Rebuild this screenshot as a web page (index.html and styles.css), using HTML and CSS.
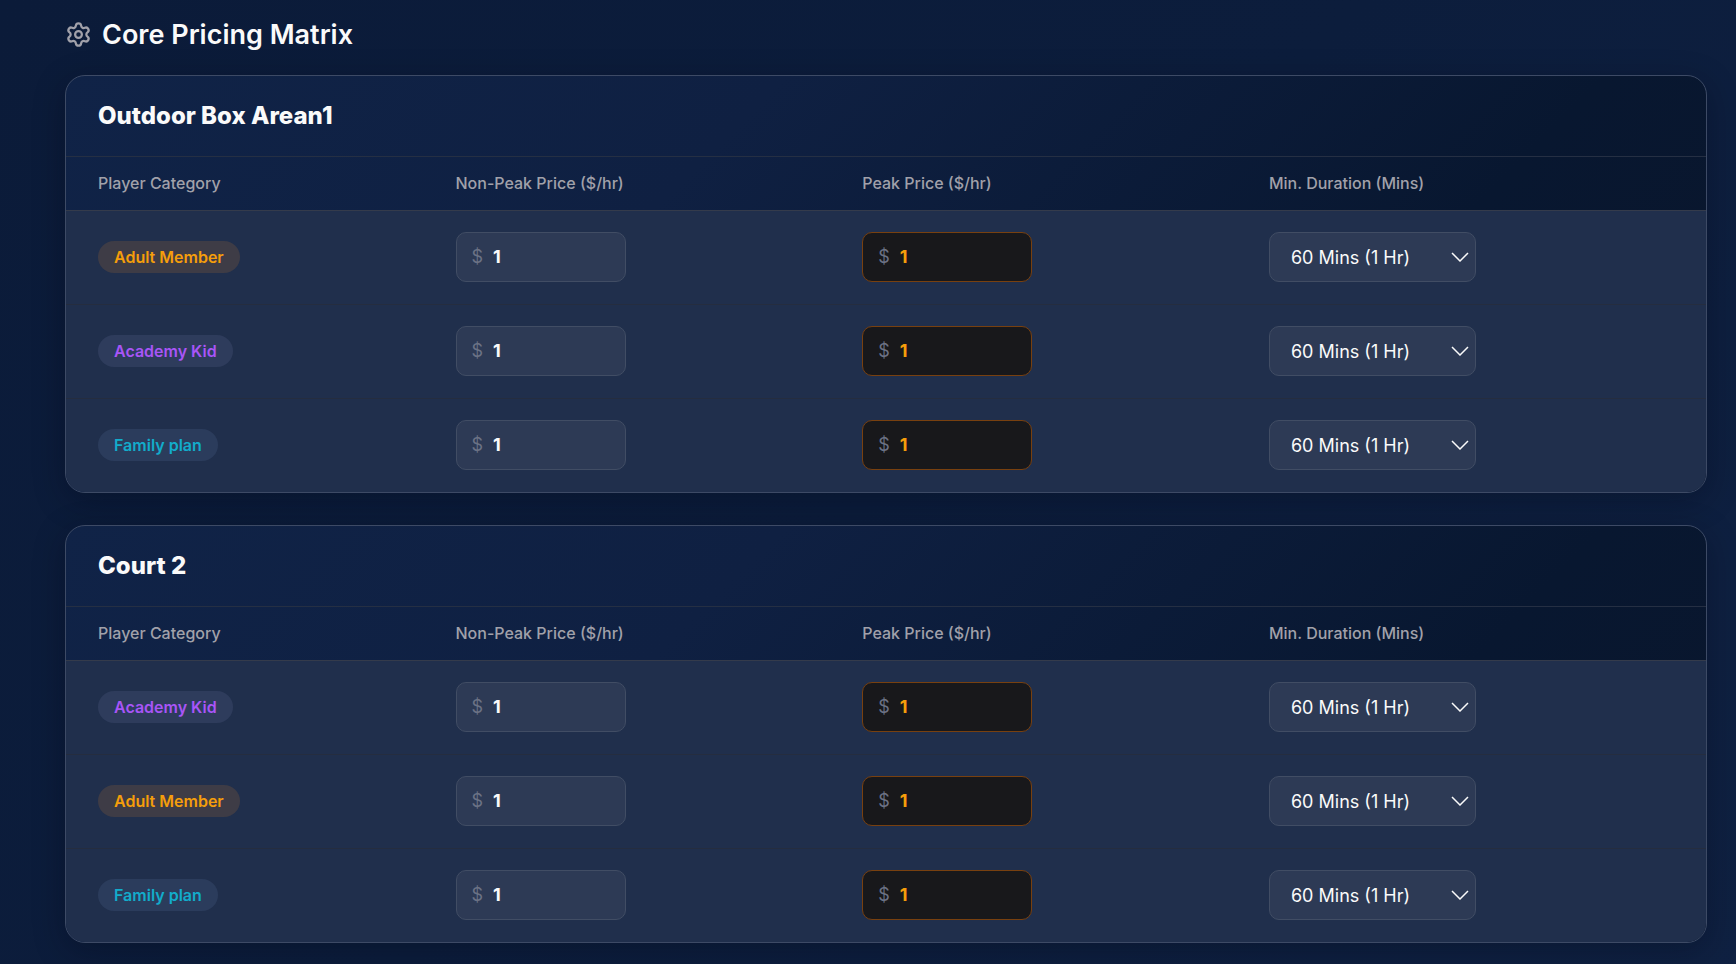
FILE: index.html
```html
<!DOCTYPE html>
<html lang="en">
<head>
    <meta charset="UTF-8">
    <meta name="viewport" content="width=device-width, initial-scale=1.0">
    <title>Core Pricing Matrix</title>
    <link rel="stylesheet" href="styles.css">
</head>
<body>
    <main class="page">
        <h1 class="page-title">
            <svg class="title-icon" viewBox="0 0 24 24" fill="none" stroke="currentColor" stroke-width="2" stroke-linecap="round" stroke-linejoin="round" aria-hidden="true">
                <path d="M9.671 4.136a2.34 2.34 0 0 1 4.659 0 2.34 2.34 0 0 0 3.319 1.915 2.34 2.34 0 0 1 2.33 4.033 2.34 2.34 0 0 0 0 3.831 2.34 2.34 0 0 1-2.33 4.033 2.34 2.34 0 0 0-3.319 1.915 2.34 2.34 0 0 1-4.659 0 2.34 2.34 0 0 0-3.32-1.915 2.34 2.34 0 0 1-2.33-4.033 2.34 2.34 0 0 0 0-3.831A2.34 2.34 0 0 1 6.35 6.051a2.34 2.34 0 0 0 3.319-1.915"/>
                <circle cx="12" cy="12" r="3"/>
            </svg>
            Core Pricing Matrix
        </h1>

        <section class="card">
            <h2 class="card-title">Outdoor Box Arean1</h2>
            <table class="pricing-table">
                <thead>
                    <tr>
                        <th class="col-category">Player Category</th>
                        <th class="col-price">Non-Peak Price ($/hr)</th>
                        <th class="col-price">Peak Price ($/hr)</th>
                        <th>Min. Duration (Mins)</th>
                    </tr>
                </thead>
                <tbody>
                    <tr>
                        <td><span class="badge badge-adult">Adult Member</span></td>
                        <td><label class="price">$ <input type="text" inputmode="numeric" value="1" aria-label="Adult Member non-peak price"></label></td>
                        <td><label class="price price-peak">$ <input type="text" inputmode="numeric" value="1" aria-label="Adult Member peak price"></label></td>
                        <td><div class="duration"><select aria-label="Adult Member minimum duration"><option>60 Mins (1 Hr)</option></select><svg class="chevron" viewBox="0 0 18 10" aria-hidden="true"><path d="M1 1l8 8 8-8"/></svg></div></td>
                    </tr>
                    <tr>
                        <td><span class="badge badge-academy">Academy Kid</span></td>
                        <td><label class="price">$ <input type="text" inputmode="numeric" value="1" aria-label="Academy Kid non-peak price"></label></td>
                        <td><label class="price price-peak">$ <input type="text" inputmode="numeric" value="1" aria-label="Academy Kid peak price"></label></td>
                        <td><div class="duration"><select aria-label="Academy Kid minimum duration"><option>60 Mins (1 Hr)</option></select><svg class="chevron" viewBox="0 0 18 10" aria-hidden="true"><path d="M1 1l8 8 8-8"/></svg></div></td>
                    </tr>
                    <tr>
                        <td><span class="badge badge-family">Family plan</span></td>
                        <td><label class="price">$ <input type="text" inputmode="numeric" value="1" aria-label="Family plan non-peak price"></label></td>
                        <td><label class="price price-peak">$ <input type="text" inputmode="numeric" value="1" aria-label="Family plan peak price"></label></td>
                        <td><div class="duration"><select aria-label="Family plan minimum duration"><option>60 Mins (1 Hr)</option></select><svg class="chevron" viewBox="0 0 18 10" aria-hidden="true"><path d="M1 1l8 8 8-8"/></svg></div></td>
                    </tr>
                </tbody>
            </table>
        </section>

        <section class="card">
            <h2 class="card-title">Court 2</h2>
            <table class="pricing-table">
                <thead>
                    <tr>
                        <th class="col-category">Player Category</th>
                        <th class="col-price">Non-Peak Price ($/hr)</th>
                        <th class="col-price">Peak Price ($/hr)</th>
                        <th>Min. Duration (Mins)</th>
                    </tr>
                </thead>
                <tbody>
                    <tr>
                        <td><span class="badge badge-academy">Academy Kid</span></td>
                        <td><label class="price">$ <input type="text" inputmode="numeric" value="1" aria-label="Academy Kid non-peak price"></label></td>
                        <td><label class="price price-peak">$ <input type="text" inputmode="numeric" value="1" aria-label="Academy Kid peak price"></label></td>
                        <td><div class="duration"><select aria-label="Academy Kid minimum duration"><option>60 Mins (1 Hr)</option></select><svg class="chevron" viewBox="0 0 18 10" aria-hidden="true"><path d="M1 1l8 8 8-8"/></svg></div></td>
                    </tr>
                    <tr>
                        <td><span class="badge badge-adult">Adult Member</span></td>
                        <td><label class="price">$ <input type="text" inputmode="numeric" value="1" aria-label="Adult Member non-peak price"></label></td>
                        <td><label class="price price-peak">$ <input type="text" inputmode="numeric" value="1" aria-label="Adult Member peak price"></label></td>
                        <td><div class="duration"><select aria-label="Adult Member minimum duration"><option>60 Mins (1 Hr)</option></select><svg class="chevron" viewBox="0 0 18 10" aria-hidden="true"><path d="M1 1l8 8 8-8"/></svg></div></td>
                    </tr>
                    <tr>
                        <td><span class="badge badge-family">Family plan</span></td>
                        <td><label class="price">$ <input type="text" inputmode="numeric" value="1" aria-label="Family plan non-peak price"></label></td>
                        <td><label class="price price-peak">$ <input type="text" inputmode="numeric" value="1" aria-label="Family plan peak price"></label></td>
                        <td><div class="duration"><select aria-label="Family plan minimum duration"><option>60 Mins (1 Hr)</option></select><svg class="chevron" viewBox="0 0 18 10" aria-hidden="true"><path d="M1 1l8 8 8-8"/></svg></div></td>
                    </tr>
                </tbody>
            </table>
        </section>
    </main>
</body>
</html>
```

FILE: styles.css
```css
* {
    box-sizing: border-box;
}
body {
    margin: 0;
    min-height: 100vh;
    background: linear-gradient(135deg, #0b1b39 0%, #0c1d3c 50%, #0f2142 100%);
    color: #fafafa;
    font-family: Inter, "Liberation Sans", sans-serif;
    font-size: 16px;
}
.page {
    padding: 18px 29px 20px 65px;
}
.page-title {
    display: flex;
    align-items: center;
    gap: 10px;
    margin: 0 0 24px;
    font-size: 27px;
    line-height: 33px;
    font-weight: 600;
}
.title-icon {
    width: 27px;
    height: 27px;
    color: #a1a1aa;
}
.card {
    margin-bottom: 32px;
    overflow: hidden;
    border: 1px solid #3d4a65;
    border-radius: 20px;
    background: linear-gradient(135deg, #102347 0%, #0f2042 35%, #081730 75%, #0a162c 100%);
    box-shadow: 0 8px 32px rgba(0, 5, 20, 0.3);
}
.card-title {
    margin: 0;
    padding: 24px 32px;
    border-bottom: 1px solid #252f43;
    font-size: 24px;
    line-height: 32px;
    font-weight: 800;
}
.pricing-table {
    width: 100%;
    border-collapse: collapse;
    table-layout: fixed;
}
.col-category {
    width: 21.8%;
}
.col-price {
    width: 24.8%;
}
th {
    height: 53px;
    padding: 0 32px;
    border-bottom: 1px solid #343b4b;
    color: #a1a1aa;
    font-size: 16px;
    font-weight: 500;
    text-align: left;
}
td {
    height: 94px;
    padding: 0 32px;
    border-bottom: 1px solid #252d3f;
}
tbody tr {
    background: #202f4c;
}
tbody tr:last-child td {
    border-bottom: 0;
}
.badge {
    display: inline-block;
    padding: 0 16px;
    border-radius: 16px;
    line-height: 32px;
    font-weight: 600;
}
.badge-adult {
    background: #3e3c46;
    color: #f59e0b;
}
.badge-academy {
    background: #2e3c5c;
    color: #a855f7;
}
.badge-family {
    background: #2b3c5c;
    color: #12accb;
}
.price {
    display: flex;
    align-items: center;
    gap: 10px;
    width: 170px;
    height: 50px;
    padding: 0 15px 2px;
    border: 1px solid #414d64;
    border-radius: 10px;
    background: #2d3a55;
    color: #6b7285;
    font-size: 18px;
}
.price input {
    flex: 1;
    min-width: 0;
    padding: 0;
    border: 0;
    background: none;
    color: #fafafa;
    font: inherit;
    font-weight: 700;
}
.price-peak {
    border-color: #78400f;
    background: #18181b;
}
.price-peak input {
    color: #f59e0b;
}
.duration {
    position: relative;
    width: 207px;
}
.duration select {
    width: 100%;
    height: 50px;
    padding: 0 40px 0 21px;
    appearance: none;
    border: 1px solid #414d64;
    border-radius: 10px;
    background: #2d3a55;
    color: #fafafa;
    font: inherit;
    font-size: 18px;
}
.chevron {
    position: absolute;
    top: 20px;
    right: 7px;
    width: 18px;
    height: 10px;
    fill: none;
    stroke: #fafafa;
    stroke-width: 1.5;
    pointer-events: none;
}
```
